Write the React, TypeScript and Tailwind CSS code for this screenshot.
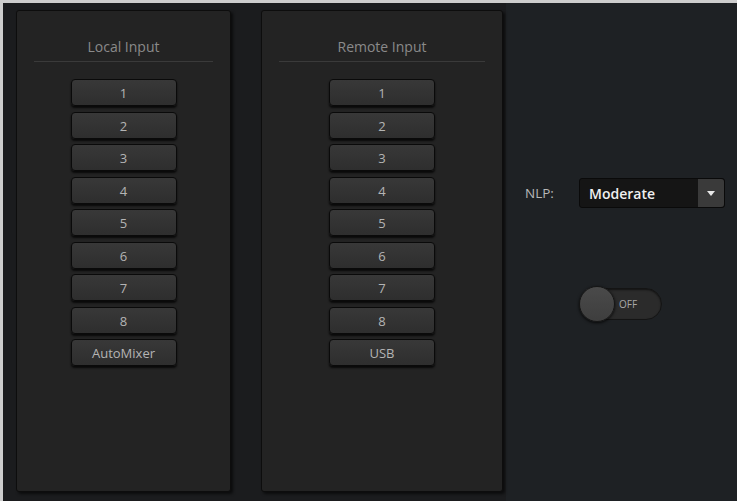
import React from "react";

const font = { fontFamily: '"Open Sans", "Noto Sans", "Liberation Sans", sans-serif' };

function ChannelButton({ label }: { label: string }) {
  return (
    <div className="flex h-[27px] w-[106px] items-center justify-center rounded-[4px] border border-[#0a0a0a] bg-gradient-to-b from-[#383838] to-[#2e2e2e] pt-[3px] text-[13px] text-[#b4b4b4] shadow-[0_2px_2px_rgba(0,0,0,0.75)]">
      {label}
    </div>
  );
}

function InputPanel({ title, labels, width }: { title: string; labels: string[]; width: string }) {
  return (
    <div
      className={`flex h-[482px] ${width} shrink-0 flex-col items-center rounded-[3px] border border-[#0d0d0d] bg-[#232323] px-[17px] shadow-[2px_2px_3px_rgba(0,0,0,0.6)]`}
    >
      <div className="mt-[26px] text-[14px] leading-[20px] text-[#8a8a8a]">{title}</div>
      <div className="mt-[4px] h-px w-full bg-[#3a3a3a]" />
      <div className="mt-[17px] flex flex-col gap-[5.5px]">
        {labels.map((l) => (
          <ChannelButton key={l} label={l} />
        ))}
      </div>
    </div>
  );
}

export default function App() {
  const nums = ["1", "2", "3", "4", "5", "6", "7", "8"];
  return (
    <div
      className="flex h-[501px] w-[737px] overflow-hidden border-l-[3px] border-t-[3px] border-[#cdcdcd] bg-[#1e2124]"
      style={font}
    >
      <div className="flex gap-[30px] bg-[#1b1c1e] pl-[13px] pt-[7px] pr-[3px]">
        <InputPanel title="Local Input" labels={[...nums, "AutoMixer"]} width="w-[215px]" />
        <InputPanel title="Remote Input" labels={[...nums, "USB"]} width="w-[242px]" />
      </div>
      <div className="flex flex-1 flex-col pl-[19px] pt-[175px]">
        <div className="flex items-center">
          <span className="w-[54px] text-[13.5px] text-[#b8b8b8]">NLP:</span>
          <div className="flex h-[30px] w-[146px] items-stretch rounded-[3px] border border-[#0a0a0a] bg-[#151515]">
            <span className="flex flex-1 items-center pl-[9px] text-[14px] font-semibold text-[#f0f0f0]">
              Moderate
            </span>
            <div className="flex w-[26px] items-center justify-center rounded-r-[3px] bg-[#3a3a3a]">
              <svg width="8" height="5" viewBox="0 0 8 5">
                <path d="M0 0 L8 0 L4 5 Z" fill="#e8e8e8" />
              </svg>
            </div>
          </div>
        </div>
        <div className="ml-[54px] mt-[80px] flex h-[32px] w-[83px] items-center rounded-full border border-[#141414] bg-[#2b2b2b] shadow-[inset_0_1px_2px_rgba(0,0,0,0.6)]">
          <div className="-ml-px h-[36px] w-[36px] shrink-0 rounded-full border border-[#161616] bg-gradient-to-b from-[#4a4a4a] to-[#3e3e3e] shadow-[0_1px_3px_rgba(0,0,0,0.8)]" />
          <span className="ml-[4px] text-[10px] text-[#a8a8a8]">OFF</span>
        </div>
      </div>
    </div>
  );
}
